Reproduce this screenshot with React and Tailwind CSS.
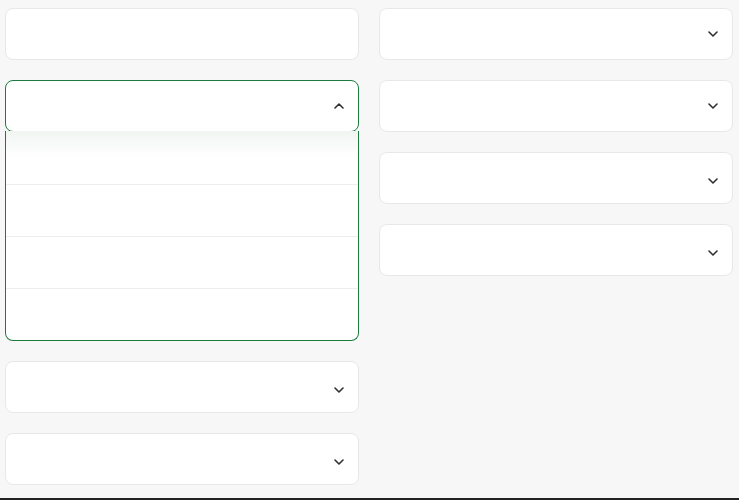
import { useState } from "react";

const leftItems = [
  { title: "Qu'est-ce que le service ?", noIcon: true },
  { title: "Comment créer un compte ?" },
  { title: "Quels sont les tarifs ?", low: true },
  { title: "Puis-je annuler à tout moment ?", low: true },
];

const rightItems = [
  { title: "Comment contacter le support ?" },
  { title: "Mes données sont-elles sécurisées ?" },
  { title: "Quels moyens de paiement ?", low: true },
  { title: "Existe-t-il une application mobile ?", low: true },
];

const options = [
  "Créer un compte",
  "Vérifier votre adresse e-mail",
  "Compléter votre profil",
  "Commencer à utiliser le service",
];

function Chevron({ up }) {
  return (
    <svg width="10" height="6" viewBox="0 0 10 6" fill="none" className={up ? "rotate-180" : ""}>
      <path d="M1 1l4 4 4-4" stroke="#2f2f2f" strokeWidth="1.6" strokeLinecap="round" strokeLinejoin="round" />
    </svg>
  );
}

function Card({ item, open, onClick }) {
  return (
    <div>
      <button
        onClick={onClick}
        className={
          open
            ? "w-full h-[52px] flex items-center justify-between pl-4 pr-[14px] bg-white border border-[#1b7a3e] rounded-lg text-left"
            : "w-full h-[52px] flex items-center justify-between pl-4 pr-[14px] bg-white border border-[#e8e8eb] rounded-lg text-left"
        }
      >
        <span className="text-[13px] text-white">{item.title}</span>
        {!item.noIcon && (
          <span className={item.low ? "pt-[5px] flex" : "flex"}>
            <Chevron up={open} />
          </span>
        )}
      </button>
      {open && (
        <div className="-mt-[1px] bg-white border-x border-b border-[#1b7a3e] rounded-b-lg overflow-hidden">
          {options.map((o, i) => (
            <div
              key={o}
              className={
                i === 0
                  ? "h-[53px] flex items-center px-4 bg-gradient-to-b from-[#f0f5f2] via-white to-white"
                  : "h-[52px] flex items-center px-4 border-t border-[#eeeef1]"
              }
            >
              <span className="text-[13px] text-white">{o}</span>
            </div>
          ))}
        </div>
      )}
    </div>
  );
}

export default function App() {
  const [open, setOpen] = useState("l1");

  return (
    <div className="min-h-[500px] bg-[#f7f7f8] flex flex-col" style={{ fontFamily: "Inter, 'Noto Sans', sans-serif" }}>
      <div className="grid grid-cols-2 gap-x-5 pl-[5px] pr-[6px] pt-2 h-[498px] items-start">
        <div className="flex flex-col gap-5">
          {leftItems.map((item, i) => (
            <Card
              key={item.title}
              item={item}
              open={open === "l" + i}
              onClick={() => setOpen(open === "l" + i ? null : "l" + i)}
            />
          ))}
        </div>
        <div className="flex flex-col gap-5">
          {rightItems.map((item, i) => (
            <Card
              key={item.title}
              item={item}
              open={open === "r" + i}
              onClick={() => setOpen(open === "r" + i ? null : "r" + i)}
            />
          ))}
        </div>
      </div>
      <div className="h-[2px] bg-[#222222]" />
    </div>
  );
}
